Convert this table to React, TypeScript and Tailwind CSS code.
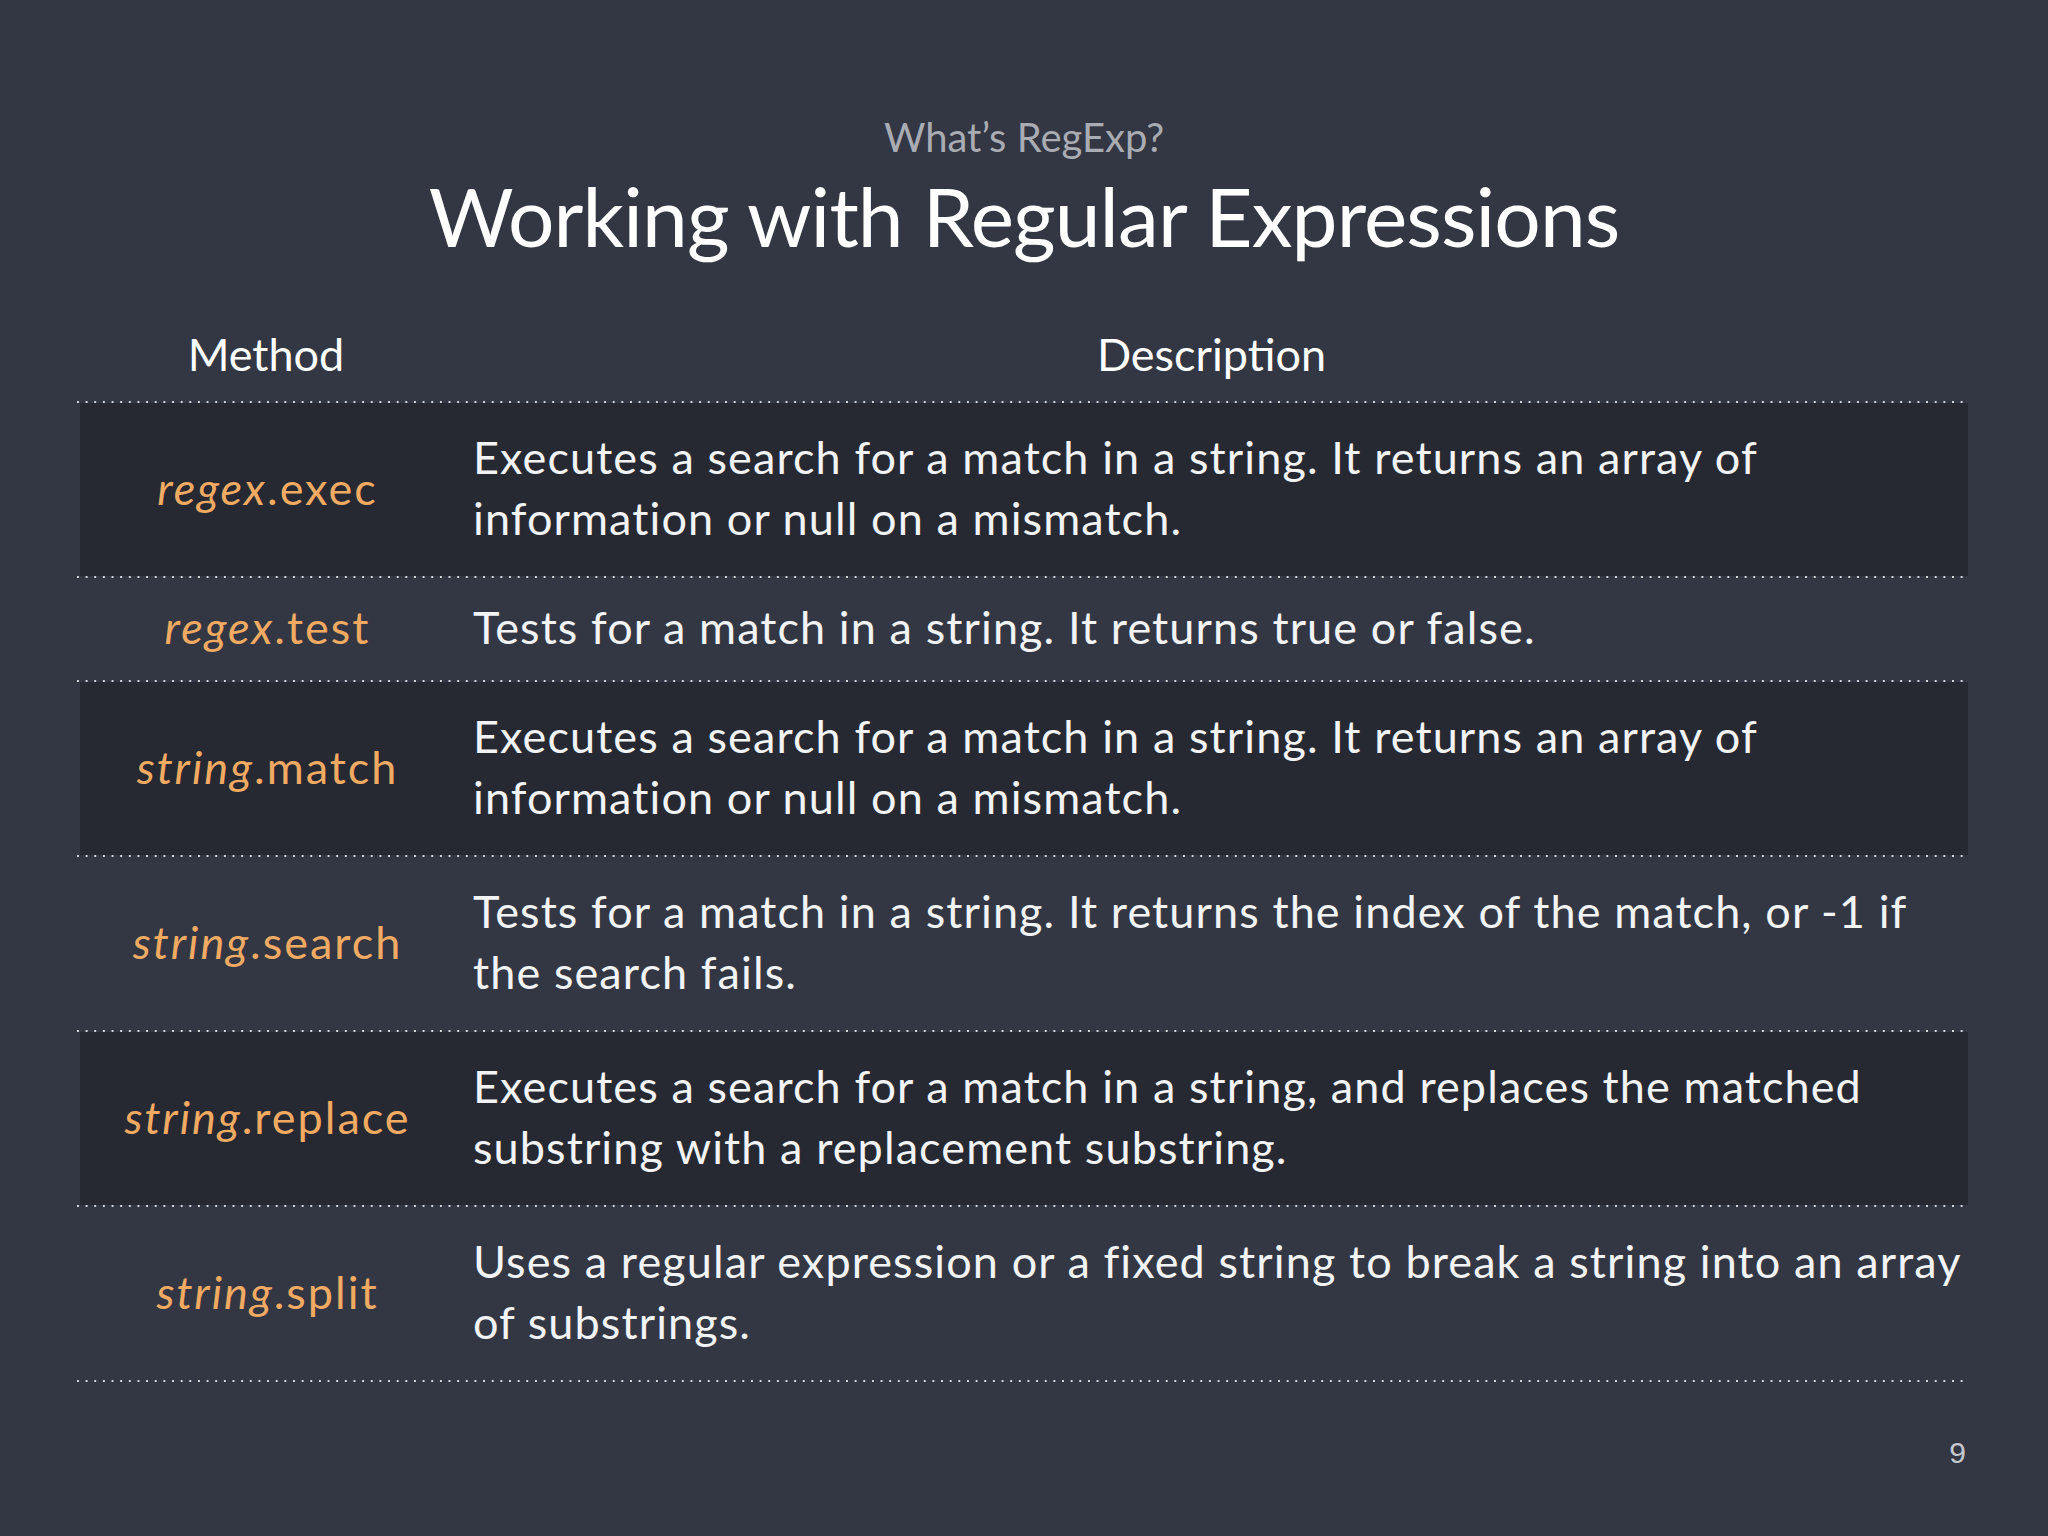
import React from "react";

type Row = { obj: string; fn: string; lines: string[]; dark: boolean };

const rows: Row[] = [
  {
    obj: "regex",
    fn: "exec",
    lines: [
      "Executes a search for a match in a string. It returns an array of",
      "information or null on a mismatch.",
    ],
    dark: true,
  },
  {
    obj: "regex",
    fn: "test",
    lines: ["Tests for a match in a string. It returns true or false."],
    dark: false,
  },
  {
    obj: "string",
    fn: "match",
    lines: [
      "Executes a search for a match in a string. It returns an array of",
      "information or null on a mismatch.",
    ],
    dark: true,
  },
  {
    obj: "string",
    fn: "search",
    lines: [
      "Tests for a match in a string. It returns the index of the match, or -1 if",
      "the search fails.",
    ],
    dark: false,
  },
  {
    obj: "string",
    fn: "replace",
    lines: [
      "Executes a search for a match in a string, and replaces the matched",
      "substring with a replacement substring.",
    ],
    dark: true,
  },
  {
    obj: "string",
    fn: "split",
    lines: [
      "Uses a regular expression or a fixed string to break a string into an array",
      "of substrings.",
    ],
    dark: false,
  },
];

function Dots() {
  return (
    <div className="h-[2px] w-[1891px] bg-[linear-gradient(to_right,#d6d8dd_2px,transparent_2px)] bg-[length:8.65px_2px]" />
  );
}

export default function App() {
  return (
    <div className="w-[2048px] h-[1536px] bg-[#333743] font-['Lato',sans-serif] flex flex-col">
      <div className="pt-[113px] text-center text-[40px] leading-[48px] text-[#a9acb3]">
        What’s RegExp?
      </div>
      <div className="mt-[4px] text-center text-[82px] leading-[100px] tracking-[-0.9px] text-white">
        Working with Regular Expressions
      </div>
      <div className="ml-[77px] w-[1891px] flex flex-col">
        <div className="flex pt-[59px] pb-[16px] text-[45px] leading-[61px] text-white">
          <div className="w-[378px] text-center">Method</div>
          <div className="flex-1 text-center">Description</div>
        </div>
        <Dots />
        {rows.map((r, i) => (
          <React.Fragment key={i}>
            <div
              className={
                (r.dark ? "bg-[#262932] " : "") +
                (r.lines.length > 1 ? "h-[173px] " : "h-[102px] ") +
                "ml-[3px] flex items-center text-[45px] leading-[61px] pb-[3px]"
              }
            >
              <div className="w-[375px] text-center text-[#f0aa62] tracking-[2px]">
                <span className="italic">{r.obj}</span>.{r.fn}
              </div>
              <div className="pl-[18px] text-[#f2f3f5] whitespace-nowrap tracking-[1.1px]">
                {r.lines.map((l, j) => (
                  <div key={j}>{l}</div>
                ))}
              </div>
            </div>
            <Dots />
          </React.Fragment>
        ))}
        <div className="mt-[53px] flex justify-end pr-[2px] text-[30px] leading-[36px] text-[#c5c8ce] font-['Liberation_Sans',sans-serif]">
          9
        </div>
      </div>
    </div>
  );
}
